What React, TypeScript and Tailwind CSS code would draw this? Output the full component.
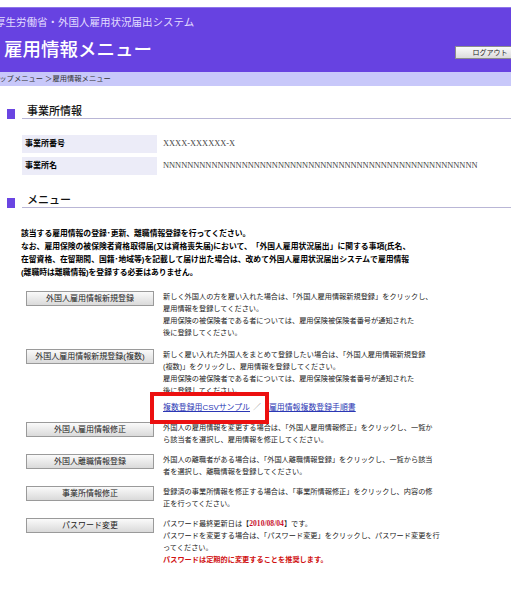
import React from 'react';

const JP = "font-['Liberation_Sans','Noto_Sans_CJK_JP',sans-serif]";

type MenuRow = {
  label: string;
  lines: React.ReactNode[];
  extra?: React.ReactNode;
};

const rows: MenuRow[] = [
  {
    label: '外国人雇用情報新規登録',
    lines: [
      '新しく外国人の方を雇い入れた場合は、「外国人雇用情報新規登録」をクリックし、',
      '雇用情報を登録してください。',
      '雇用保険の被保険者である者については、雇用保険被保険者番号が通知された',
      '後に登録してください。',
    ],
  },
  {
    label: '外国人雇用情報新規登録(複数)',
    lines: [
      '新しく雇い入れた外国人をまとめて登録したい場合は、「外国人雇用情報新規登録',
      '(複数)」をクリックし、雇用情報を登録してください。',
      '雇用保険の被保険者である者については、雇用保険被保険者番号が通知された',
      '後に登録してください。',
    ],
    extra: (
      <div className="mt-[5px] flex items-center text-[7.9px]">
        <a className="text-[#2b37b4] underline">複数登録用CSVサンプル</a>
        <span className="ml-[3px] mr-[8px] text-[#666]">／</span>
        <a className="text-[#2b37b4] underline">雇用情報複数登録手順書</a>
      </div>
    ),
  },
  {
    label: '外国人雇用情報修正',
    lines: [
      '外国人の雇用情報を変更する場合は、「外国人雇用情報修正」をクリックし、一覧か',
      'ら該当者を選択し、雇用情報を修正してください。',
    ],
  },
  {
    label: '外国人離職情報登録',
    lines: [
      '外国人の離職者がある場合は、「外国人離職情報登録」をクリックし、一覧から該当',
      '者を選択し、離職情報を登録してください。',
    ],
  },
  {
    label: '事業所情報修正',
    lines: [
      '登録済の事業所情報を修正する場合は、「事業所情報修正」をクリックし、内容の修',
      '正を行ってください。',
    ],
  },
  {
    label: 'パスワード変更',
    lines: [
      <>
        パスワード最終更新日は【
        <span className="font-['Liberation_Serif',serif] text-[7.6px] font-bold text-[#c8102e]">2010/08/04</span>
        】です。
      </>,
      'パスワードを変更する場合は、「パスワード変更」をクリックし、パスワード変更を行',
      'ってください。',
      <span className="font-bold text-[#d01010]">パスワードは定期的に変更することを推奨します。</span>,
    ],
  },
];

function SectionTitle({ title }: { title: string }) {
  return (
    <div className="flex items-end">
      <div className="ml-[7px] h-[10px] w-[8px] bg-[#6a45e2]" />
      <div className="ml-[7px] flex-1 border-b border-[#b9b6d6] pl-[5px] text-[11px] font-medium leading-[14px] text-[#111]">
        {title}
      </div>
    </div>
  );
}

export default function App() {
  return (
    <div className={`relative h-[590px] w-[511px] overflow-hidden bg-white text-black ${JP}`}>
      {/* ヘッダー */}
      <div className="pt-[7px]">
        <div className="h-[65px] border-t border-[#8e74ea] bg-[#6742e1]">
          <div className="-ml-[5px] mt-[7px] whitespace-nowrap text-[10.5px] leading-[14px] text-[#e2dcff]">
            厚生労働省・外国人雇用状況届出システム
          </div>
          <div className="mt-[9px] flex items-start justify-between">
            <h1 className="ml-[4px] whitespace-nowrap text-[18.5px] font-medium leading-[24px] text-white">雇用情報メニュー</h1>
            <button className="-mr-[14px] mt-[8px] h-[13px] w-[70px] border border-[#8c8c8c] bg-gradient-to-b from-[#fbfbfb] to-[#dcdcdc] text-[7px] leading-[11px] text-[#222]">
              ログアウト
            </button>
          </div>
        </div>
        <div className="h-[14px] whitespace-nowrap bg-[#c8c8fa] text-[7.3px] leading-[14px] text-[#333]">
          <span className="-ml-[8px] inline-block">トップメニュー ＞雇用情報メニュー</span>
        </div>
      </div>

      {/* 事業所情報 */}
      <div className="mt-[18px]">
        <SectionTitle title="事業所情報" />
      </div>
      <div className="ml-[22px] mt-[16px] grid grid-cols-[135px_1fr] gap-y-[4px] text-[8px]">
        <div className="flex h-[18px] items-center bg-[#ececf8] pl-[3px] font-bold">事業所番号</div>
        <div className="flex h-[18px] items-center pl-[6px] font-['Liberation_Serif',serif] text-[8.4px] text-[#444]">
          XXXX-XXXXXX-X
        </div>
        <div className="flex h-[18px] items-center bg-[#ececf8] pl-[3px] font-bold">事業所名</div>
        <div className="flex h-[18px] items-center whitespace-nowrap pl-[6px] font-['Liberation_Serif',serif] text-[8.4px] text-[#444]">
          {'N'.repeat(52)}
        </div>
      </div>

      {/* メニュー */}
      <div className="mt-[18px]">
        <SectionTitle title="メニュー" />
      </div>
      <div className="ml-[21px] mt-[19px] whitespace-nowrap text-[7.8px] font-bold leading-[13px]">
        <div>該当する雇用情報の登録･更新、離職情報登録を行ってください。</div>
        <div>なお、雇用保険の被保険者資格取得届(又は資格喪失届)において、「外国人雇用状況届出」に関する事項(氏名、</div>
        <div>在留資格、在留期間、国籍･地域等)を記載して届け出た場合は、改めて外国人雇用状況届出システムで雇用情報</div>
        <div>(離職時は離職情報)を登録する必要はありません。</div>
      </div>

      <div className="mt-[12px] flex flex-col gap-[8px]">
        {rows.map((row, i) => (
          <div key={row.label} className={`flex items-start ${i === 1 ? 'mt-[2px]' : ''}`}>
            <button className="ml-[26px] h-[15px] w-[128px] shrink-0 whitespace-nowrap border border-[#9a9a9a] bg-gradient-to-b from-[#fafafa] to-[#dadada] text-[8px] leading-[13px] text-[#222]">
              {row.label}
            </button>
            <div className="ml-[9px] whitespace-nowrap text-[7.2px] leading-[12px] text-[#222]">
              {row.lines.map((line, j) => (
                <div key={j}>{line}</div>
              ))}
              {row.extra}
            </div>
          </div>
        ))}
      </div>

      {/* 注記の赤枠 */}
      <div className="absolute left-[150px] top-[392px] h-[32px] w-[119px] border-4 border-[#ec1010]" />
    </div>
  );
}
